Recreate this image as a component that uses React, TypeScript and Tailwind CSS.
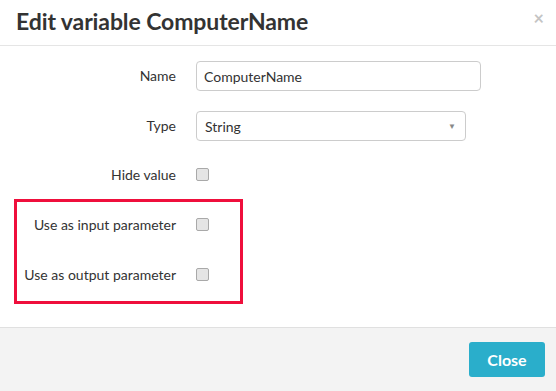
import { Fragment } from 'react';

const rows = [
  { label: 'Hide value' },
  { label: 'Use as input parameter' },
  { label: 'Use as output parameter' },
];

function Checkbox() {
  return <div className="w-[13px] h-[13px] rounded-[2px] border border-[#a9a9a9] bg-[#e5e5e5]" />;
}

export default function App() {
  return (
    <div className="relative w-[556px] h-[391px] bg-white text-[#333] overflow-hidden" style={{ fontFamily: 'Lato, "Open Sans", sans-serif' }}>
      {/* HEADER */}
      <div className="h-[46px] flex items-start justify-between border-b border-[#e5e5e5] pl-4 pr-3">
        <h4 className="text-[23px] font-bold leading-none mt-[10px] tracking-[-0.1px] text-[#333]">Edit variable ComputerName</h4>
        <span className="text-[18px] font-bold leading-none mt-[9px] text-[#c4c4c4]">×</span>
      </div>

      {/* BODY */}
      <div className="h-[281px] pt-[15px] grid grid-cols-[176px_1fr] gap-x-5 content-start text-[14px]">
        <label className="h-[29px] flex items-center justify-end">Name</label>
        <div className="pr-[75px]">
          <div className="h-[30px] w-[285px] border border-[#ccc] rounded-[4px] flex items-center px-[7px]">ComputerName</div>
        </div>

        <label className="h-[29px] mt-[20px] flex items-center justify-end">Type</label>
        <div className="mt-[20px]">
          <div className="h-[30px] w-[270px] border border-[#ccc] rounded-[4px] flex items-center justify-between pl-[8px] pr-[9px]">
            <span>String</span>
            <span className="text-[8px] text-[#888]">▼</span>
          </div>
        </div>

        {rows.map((r, i) => (
          <Fragment key={r.label}>
            <label className={`h-[20px] flex items-center justify-end ${i === 0 ? 'mt-[23px]' : 'mt-[30px]'}`}>{r.label}</label>
            <div className={`h-[20px] flex items-center ${i === 0 ? 'mt-[23px]' : 'mt-[30px]'}`}>
              <Checkbox />
            </div>
          </Fragment>
        ))}
      </div>

      {/* FOOTER */}
      <div className="h-[64px] border-t border-[#e0e0e0] bg-[#f3f3f3] flex items-start justify-end pt-[14px] pr-[11px]">
        <button className="w-[76px] h-[35px] rounded-[3px] bg-[#2aaecb] text-white font-bold text-[16px]">Close</button>
      </div>

      {/* highlight annotation */}
      <div className="absolute left-[14px] top-[199px] w-[229px] h-[105px] border-[3px] border-[#ef0f3c]" />
    </div>
  );
}
